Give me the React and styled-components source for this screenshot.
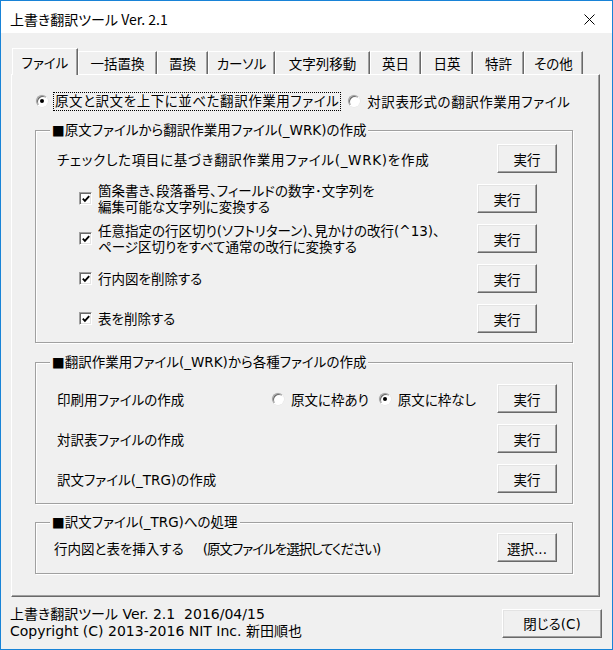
import React from "react";
import styled, { createGlobalStyle } from "styled-components";

const GlobalStyle = createGlobalStyle`
  html, body {
    margin: 0;
    padding: 0;
    background: #fff;
  }
  body {
    font-family: "DejaVu Sans", "Noto Sans CJK JP", sans-serif;
    font-size: 13.5px;
    font-feature-settings: "palt";
    color: #000;
  }
  * {
    box-sizing: border-box;
  }
`;

const TABS = [
  { label: "ファイル", w: 66 },
  { label: "一括置換", w: 79 },
  { label: "置換", w: 51 },
  { label: "カーソル", w: 67 },
  { label: "文字列移動", w: 95 },
  { label: "英日", w: 51 },
  { label: "日英", w: 52 },
  { label: "特許", w: 51 },
  { label: "その他", w: 59 },
];

const CHECK_ITEMS = [
  ["箇条書き、段落番号、フィールドの数字･文字列を", "編集可能な文字列に変換する"],
  ["任意指定の行区切り(ソフトリターン)、見かけの改行(^13)、", "ページ区切りをすべて通常の改行に変換する"],
  ["行内図を削除する"],
  ["表を削除する"],
];

/**
 * 上書き翻訳ツール main dialog
 */
export default function App() {
  return (
    <>
      <GlobalStyle />
      <Window>
        <TitleBar>
          <Title>上書き翻訳ツール Ver. 2.1</Title>
          <CloseBox>
            <svg width="11" height="11" viewBox="0 0 11 11">
              <path d="M0.5 0.5L10.5 10.5M10.5 0.5L0.5 10.5" stroke="#000" strokeWidth="1" />
            </svg>
          </CloseBox>
        </TitleBar>

        <Body>
          <TabStrip>
            {TABS.map((t, i) => (
              <Tab key={t.label} $active={i === 0} $w={t.w}>
                {t.label}
              </Tab>
            ))}
          </TabStrip>

          <Panel>
            <ModeRow>
              <RadioItem>
                <RadioDot $on />
                <FocusLabel>原文と訳文を上下に並べた翻訳作業用ファイル</FocusLabel>
              </RadioItem>
              <RadioItem>
                <RadioDot />
                <span>対訳表形式の翻訳作業用ファイル</span>
              </RadioItem>
            </ModeRow>

            <Group $mt={19} $pb={9}>
              <GroupTitle>■原文ファイルから翻訳作業用ファイル(_WRK)の作成</GroupTitle>
              <RowList $mt={5}>
                <Row>
                  <Label $spacing={0.7}>チェックした項目に基づき翻訳作業用ファイル(_WRK)を作成</Label>
                  <Button>実行</Button>
                </Row>
                {CHECK_ITEMS.map((lines) => (
                  <Row key={lines[0]} $inset>
                    <CheckBox>
                      <svg width="8" height="8" viewBox="0 0 8 8">
                        <polyline points="0.8,3.6 2.9,5.8 7.2,1.2" fill="none" stroke="#000" strokeWidth="1.9" />
                      </svg>
                    </CheckBox>
                    <CheckText>
                      {lines.map((l) => (
                        <div key={l}>{l}</div>
                      ))}
                    </CheckText>
                    <Button>実行</Button>
                  </Row>
                ))}
              </RowList>
            </Group>

            <Group $mt={19} $pb={10}>
              <GroupTitle>■翻訳作業用ファイル(_WRK)から各種ファイルの作成</GroupTitle>
              <RowList $mt={13}>
                <Row>
                  <Label>印刷用ファイルの作成</Label>
                  <RadioGroup>
                    <RadioItem>
                      <RadioDot />
                      <span>原文に枠あり</span>
                    </RadioItem>
                    <RadioItem>
                      <RadioDot $on />
                      <span>原文に枠なし</span>
                    </RadioItem>
                  </RadioGroup>
                  <Button>実行</Button>
                </Row>
                <Row>
                  <Label>対訳表ファイルの作成</Label>
                  <Button>実行</Button>
                </Row>
                <Row>
                  <Label>訳文ファイル(_TRG)の作成</Label>
                  <Button>実行</Button>
                </Row>
              </RowList>
            </Group>

            <Group $mt={18} $pb={11}>
              <GroupTitle>■訳文ファイル(_TRG)への処理</GroupTitle>
              <RowList $mt={2}>
                <Row>
                  <Label $shift={-3}>
                    行内図と表を挿入する<Note>(原文ファイルを選択してください)</Note>
                  </Label>
                  <Button>選択...</Button>
                </Row>
              </RowList>
            </Group>
          </Panel>

          <Footer>
            <Credits>
              <div>上書き翻訳ツール Ver. 2.1&nbsp;&nbsp;2016/04/15</div>
              <div>Copyright (C) 2013-2016 NIT Inc. 新田順也</div>
            </Credits>
            <Button $w={100}>閉じる(C)</Button>
          </Footer>
        </Body>
      </Window>
    </>
  );
}

const Window = styled.div`
  width: 613px;
  height: 650px;
  border: 1px solid #1883d7;
  background: #f0f0f0;
  display: flex;
  flex-direction: column;
`;

const TitleBar = styled.div`
  flex: none;
  height: 32px;
  background: #fff;
  display: flex;
  align-items: center;
  padding: 4px 0 0 9px;
`;

const Title = styled.div`
  flex: 1;
  font-family: "Noto Sans CJK JP", sans-serif;
  font-size: 14px;
`;

const CloseBox = styled.div`
  width: 46px;
  height: 100%;
  display: flex;
  align-items: center;
  justify-content: center;
`;

const Body = styled.div`
  flex: 1;
  display: flex;
  flex-direction: column;
  padding: 15px 12px 0 10px;
`;

const TabStrip = styled.div`
  display: flex;
  align-items: flex-end;
  height: 26px;
  padding-left: 1px;
`;

const Tab = styled.div`
  position: relative;
  width: ${(p) => p.$w}px;
  height: ${(p) => (p.$active ? 27 : 23)}px;
  margin-bottom: ${(p) => (p.$active ? -1 : 0)}px;
  z-index: ${(p) => (p.$active ? 1 : 0)};
  display: flex;
  align-items: center;
  justify-content: center;
  background: #f0f0f0;
  border-top: 1px solid #fff;
  border-left: 1px solid #fff;
  border-right: 1px solid #696969;
  box-shadow: inset -1px 0 0 #a0a0a0;
  padding-bottom: ${(p) => (p.$active ? 1 : 0)}px;
`;

const Panel = styled.div`
  height: 523px;
  display: flex;
  flex-direction: column;
  border: 1px solid;
  border-color: #fff #696969 #696969 #fff;
  box-shadow: inset -1px -1px 0 #a0a0a0;
  padding: 0 26px 0 23px;
`;

const ModeRow = styled.div`
  margin-top: 16px;
  height: 20px;
  display: flex;
  align-items: center;
  gap: 8px;
  padding-left: 1px;
  letter-spacing: 0.55px;
`;

const RadioItem = styled.label`
  display: inline-flex;
  align-items: center;
  gap: 7px;
  white-space: nowrap;
`;

const RadioDot = styled.span`
  flex: none;
  width: 12px;
  height: 12px;
  border-radius: 50%;
  background: #fff;
  border: 1px solid;
  border-color: #a0a0a0 #fff #fff #a0a0a0;
  box-shadow: inset 1px 1px 0 #696969, 0 0 0 0.5px #e3e3e3;
  display: flex;
  align-items: center;
  justify-content: center;

  &::after {
    content: "";
    width: 4px;
    height: 4px;
    border-radius: 50%;
    background: ${(p) => (p.$on ? "#000" : "transparent")};
  }
`;

const FocusLabel = styled.span`
  outline: 1px dotted #000;
  padding: 0 1px;
  line-height: 17px;
  margin-left: -1px;
`;

const Group = styled.div`
  margin-top: ${(p) => p.$mt}px;
  display: flex;
  flex-direction: column;
  border: 1px solid #a0a0a0;
  box-shadow: 1px 1px 0 #fff, inset 1px 1px 0 #fff;
  padding: 0 15px ${(p) => p.$pb}px 21px;
`;

const GroupTitle = styled.div`
  align-self: flex-start;
  margin: -10px 0 0 -7px;
  height: 18px;
  line-height: 18px;
  padding: 0 2px;
  background: #f0f0f0;
  white-space: nowrap;
`;

const RowList = styled.div`
  margin-top: ${(p) => p.$mt}px;
  display: flex;
  flex-direction: column;
  gap: 11px;
`;

const Row = styled.div`
  height: 29px;
  display: flex;
  align-items: center;
  padding: ${(p) => (p.$inset ? "0 20px 0 22px" : "0")};
`;

const Label = styled.div`
  flex: 1;
  white-space: nowrap;
  letter-spacing: ${(p) => p.$spacing || 0}px;
  margin-left: ${(p) => p.$shift || 0}px;
`;

const Note = styled.span`
  margin-left: 19px;
  letter-spacing: -1px;
`;

const CheckBox = styled.span`
  flex: none;
  width: 13px;
  height: 13px;
  background: #fff;
  border: 1px solid;
  border-color: #a0a0a0 #fff #fff #a0a0a0;
  box-shadow: inset 1px 1px 0 #696969, inset -1px -1px 0 #e3e3e3;
  display: flex;
  align-items: center;
  justify-content: center;
  padding: 1px 0 0 1px;
`;

const CheckText = styled.div`
  flex: 1;
  margin-left: 6px;
  line-height: 16px;
  white-space: nowrap;
`;

const RadioGroup = styled.div`
  display: flex;
  gap: 10px;
  margin-right: 21px;
`;

const Button = styled.button`
  flex: none;
  width: ${(p) => p.$w || 60}px;
  height: 29px;
  padding: 0;
  font: inherit;
  color: #000;
  background: #f0f0f0;
  border: 1px solid;
  border-color: #fff #696969 #696969 #fff;
  box-shadow: inset -1px -1px 0 #a0a0a0, inset 1px 1px 0 #e3e3e3;
`;

const Footer = styled.div`
  flex: 1;
  display: flex;
  align-items: center;
  justify-content: space-between;
  margin: 0 -2px 0 -1px;
`;

const Credits = styled.div`
  font-size: 14px;
  line-height: 17px;
  white-space: nowrap;
`;
